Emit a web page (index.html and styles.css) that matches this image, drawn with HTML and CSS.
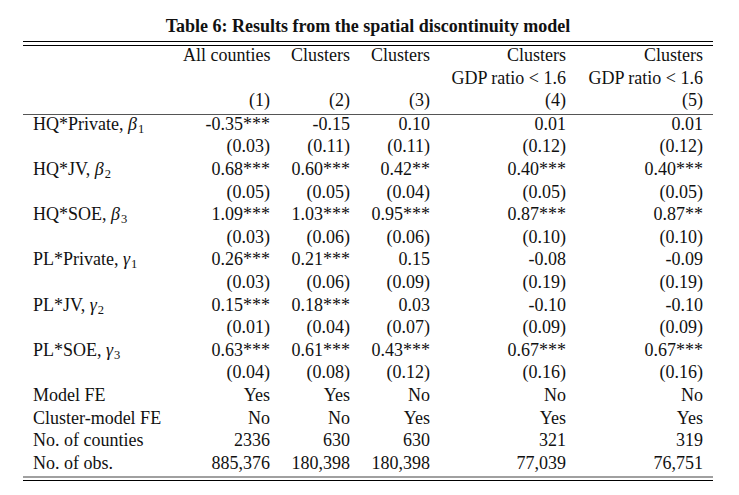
FILE: index.html
```html
<!DOCTYPE html>
<html>
<head>
<meta charset="utf-8">
<link rel="stylesheet" href="styles.css">
</head>
<body>
<div class="page">
  <div class="title">Table 6: Results from the spatial discontinuity model</div>
  <div class="toprule"></div>
  <table class="results">
    <colgroup>
      <col class="c-label"><col class="c1"><col class="c2"><col class="c3"><col class="c4"><col class="c5">
    </colgroup>
    <thead>
      <tr><td class="lbl"></td><td>All counties</td><td>Clusters</td><td>Clusters</td><td>Clusters</td><td>Clusters</td></tr>
      <tr><td class="lbl"></td><td></td><td></td><td></td><td>GDP ratio &lt; 1.6</td><td>GDP ratio &lt; 1.6</td></tr>
      <tr class="last"><td class="lbl"></td><td>(1)</td><td>(2)</td><td>(3)</td><td>(4)</td><td>(5)</td></tr>
    </thead>
    <tbody>
      <tr><td class="lbl">HQ*Private, <i>β</i><span class="sub">1</span></td><td>-0.35***</td><td>-0.15</td><td>0.10</td><td>0.01</td><td>0.01</td></tr>
      <tr><td class="lbl"></td><td>(0.03)</td><td>(0.11)</td><td>(0.11)</td><td>(0.12)</td><td>(0.12)</td></tr>
      <tr><td class="lbl">HQ*JV, <i>β</i><span class="sub">2</span></td><td>0.68***</td><td>0.60***</td><td>0.42**</td><td>0.40***</td><td>0.40***</td></tr>
      <tr><td class="lbl"></td><td>(0.05)</td><td>(0.05)</td><td>(0.04)</td><td>(0.05)</td><td>(0.05)</td></tr>
      <tr><td class="lbl">HQ*SOE, <i>β</i><span class="sub">3</span></td><td>1.09***</td><td>1.03***</td><td>0.95***</td><td>0.87***</td><td>0.87**</td></tr>
      <tr><td class="lbl"></td><td>(0.03)</td><td>(0.06)</td><td>(0.06)</td><td>(0.10)</td><td>(0.10)</td></tr>
      <tr><td class="lbl">PL*Private, <i>γ</i><span class="sub">1</span></td><td>0.26***</td><td>0.21***</td><td>0.15</td><td>-0.08</td><td>-0.09</td></tr>
      <tr><td class="lbl"></td><td>(0.03)</td><td>(0.06)</td><td>(0.09)</td><td>(0.19)</td><td>(0.19)</td></tr>
      <tr><td class="lbl">PL*JV, <i>γ</i><span class="sub">2</span></td><td>0.15***</td><td>0.18***</td><td>0.03</td><td>-0.10</td><td>-0.10</td></tr>
      <tr><td class="lbl"></td><td>(0.01)</td><td>(0.04)</td><td>(0.07)</td><td>(0.09)</td><td>(0.09)</td></tr>
      <tr><td class="lbl">PL*SOE, <i>γ</i><span class="sub">3</span></td><td>0.63***</td><td>0.61***</td><td>0.43***</td><td>0.67***</td><td>0.67***</td></tr>
      <tr><td class="lbl"></td><td>(0.04)</td><td>(0.08)</td><td>(0.12)</td><td>(0.16)</td><td>(0.16)</td></tr>
      <tr><td class="lbl">Model FE</td><td>Yes</td><td>Yes</td><td>No</td><td>No</td><td>No</td></tr>
      <tr><td class="lbl">Cluster-model FE</td><td>No</td><td>No</td><td>Yes</td><td>Yes</td><td>Yes</td></tr>
      <tr><td class="lbl">No. of counties</td><td>2336</td><td>630</td><td>630</td><td>321</td><td>319</td></tr>
      <tr><td class="lbl">No. of obs.</td><td>885,376</td><td>180,398</td><td>180,398</td><td>77,039</td><td>76,751</td></tr>
    </tbody>
  </table>
  <div class="bottomrule"></div>
</div>
</body>
</html>
```
FILE: styles.css
```css
html, body {
  margin: 0;
  padding: 0;
  background: #ffffff;
}
body {
  font-family: "Liberation Serif", "Times New Roman", serif;
  color: #111111;
  font-size: 18px;
}
.page {
  width: 690px;
  margin-left: 23px;
  padding-top: 15px;
}
.title {
  font-weight: bold;
  text-align: center;
  line-height: 22px;
}
.toprule {
  margin-top: 4px;
  height: 3px;
  border-top: 1px solid #000;
  border-bottom: 1px solid #000;
}
.results {
  width: 690px;
  table-layout: fixed;
  border-collapse: collapse;
  border-spacing: 0;
}
.c-label { width: 150px; }
.c1 { width: 107px; }
.c2 { width: 80px; }
.c3 { width: 80px; }
.c4 { width: 136px; }
.c5 { width: 137px; }
.results td {
  padding: 0 10px 3.1px 10px;
  line-height: 19.5px;
  text-align: right;
  white-space: nowrap;
  vertical-align: top;
}
.results td.lbl {
  text-align: left;
}
.results thead tr.last td {
  border-bottom: 1px solid #555;
}
.results i {
  font-style: italic;
}
.sub {
  font-size: 12.5px;
  line-height: 0;
  position: relative;
  top: 3px;
  margin-left: 1px;
}
.bottomrule {
  height: 2px;
  border-top: 2px solid #a0a0a0;
  border-bottom: 1px solid #000;
}
```
